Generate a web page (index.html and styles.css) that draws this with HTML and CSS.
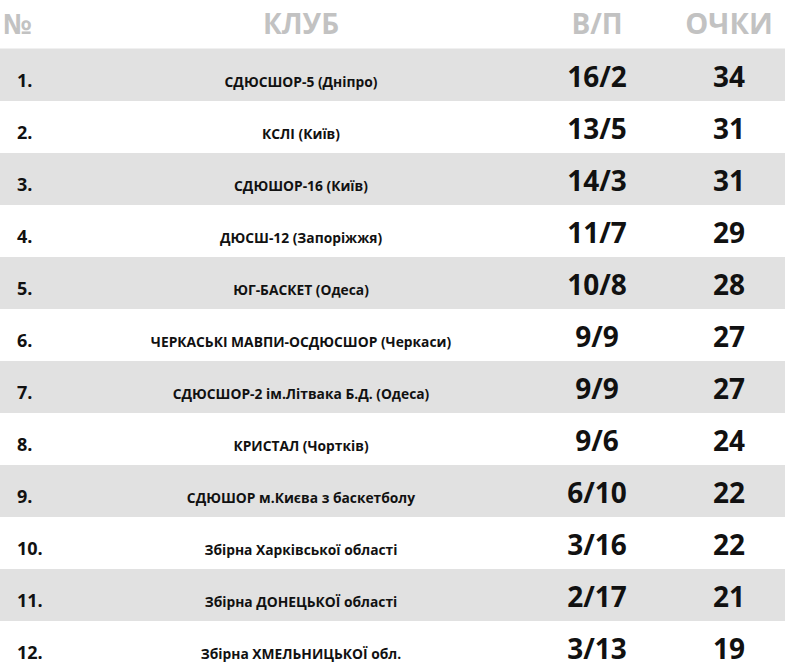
FILE: index.html
```html
<!DOCTYPE html>
<html lang="uk">
<head>
<meta charset="utf-8">
<title>Турнірна таблиця</title>
<link rel="stylesheet" href="styles.css">
</head>
<body>
<div class="standings">
  <div class="head">
    <div class="h-num">№</div>
    <div class="h-club">КЛУБ</div>
    <div class="h-wl">В/П</div>
    <div class="h-pts">ОЧКИ</div>
  </div>
  <div class="row"><div class="num">1.</div><div class="club">СДЮСШОР-5 (Дніпро)</div><div class="wl">16/2</div><div class="pts">34</div></div>
  <div class="row"><div class="num">2.</div><div class="club">КСЛІ (Київ)</div><div class="wl">13/5</div><div class="pts">31</div></div>
  <div class="row"><div class="num">3.</div><div class="club">СДЮШОР-16 (Київ)</div><div class="wl">14/3</div><div class="pts">31</div></div>
  <div class="row"><div class="num">4.</div><div class="club">ДЮСШ-12 (Запоріжжя)</div><div class="wl">11/7</div><div class="pts">29</div></div>
  <div class="row"><div class="num">5.</div><div class="club">ЮГ-БАСКЕТ (Одеса)</div><div class="wl">10/8</div><div class="pts">28</div></div>
  <div class="row"><div class="num">6.</div><div class="club">ЧЕРКАСЬКІ МАВПИ-ОСДЮСШОР (Черкаси)</div><div class="wl">9/9</div><div class="pts">27</div></div>
  <div class="row"><div class="num">7.</div><div class="club">СДЮСШОР-2 ім.Літвака Б.Д. (Одеса)</div><div class="wl">9/9</div><div class="pts">27</div></div>
  <div class="row"><div class="num">8.</div><div class="club">КРИСТАЛ (Чортків)</div><div class="wl">9/6</div><div class="pts">24</div></div>
  <div class="row"><div class="num">9.</div><div class="club">СДЮШОР м.Києва з баскетболу</div><div class="wl">6/10</div><div class="pts">22</div></div>
  <div class="row"><div class="num">10.</div><div class="club">Збірна Харківської області</div><div class="wl">3/16</div><div class="pts">22</div></div>
  <div class="row"><div class="num">11.</div><div class="club">Збірна ДОНЕЦЬКОЇ області</div><div class="wl">2/17</div><div class="pts">21</div></div>
  <div class="row"><div class="num">12.</div><div class="club">Збірна ХМЕЛЬНИЦЬКОЇ обл.</div><div class="wl">3/13</div><div class="pts">19</div></div>
</div>
</body>
</html>
```

FILE: styles.css
```css
html, body {
  margin: 0;
  padding: 0;
  background: #fff;
}

body {
  font-family: "Open Sans", "Liberation Sans", sans-serif;
  font-weight: 700;
  color: #111;
}

.standings {
  width: 785px;
}

.head,
.row {
  display: grid;
  grid-template-columns: 81px 440px 152px 1fr;
  align-items: baseline;
  box-sizing: border-box;
}

.head {
  height: 49px;
  padding-top: 9px;
  border-bottom: 1px solid #f0f0f0;
  color: #c2c2c2;
  font-size: 28px;
  line-height: 28px;
}

.h-num {
  padding-left: 3px;
}

.h-club,
.h-wl,
.h-pts {
  text-align: center;
}

.h-pts {
  font-size: 29px;
}

.row {
  height: 52px;
  padding-top: 13px;
  line-height: 28px;
}

.row:nth-child(even) {
  background: #e1e1e1;
}

.num {
  padding-left: 17px;
  font-size: 18px;
}

.club {
  text-align: center;
  font-size: 13.8px;
}

.wl,
.pts {
  text-align: center;
  font-size: 28px;
}
```
